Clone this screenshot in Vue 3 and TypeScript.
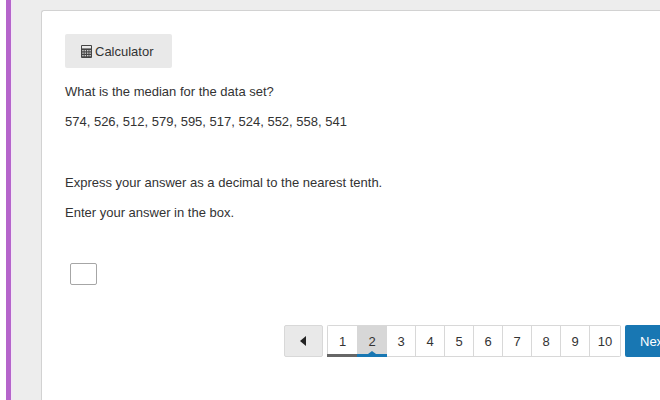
<script setup lang="ts">
import { ref } from 'vue'

const answer = ref<string>('')
const pages: number[] = Array.from({ length: 10 }, (_, i) => i + 1)
const current = ref<number>(2)
const visited = ref<number[]>([1])

function go(page: number): void {
  if (page < 1 || page > pages.length) return
  if (!visited.value.includes(current.value)) visited.value.push(current.value)
  current.value = page
}
</script>

<template>
  <div class="page">
    <main class="card">
      <button type="button" class="calculator">
        <svg class="calc-icon" viewBox="0 0 11 13" aria-hidden="true">
          <rect width="11" height="13" rx="1" fill="#444" />
          <rect x="1" y="1" width="9" height="2.4" fill="#e9e9e9" />
          <g fill="#cfcfcf">
            <rect x="1.2" y="5" width="1.5" height="1.3" />
            <rect x="3.6" y="5" width="1.5" height="1.3" />
            <rect x="6" y="5" width="1.5" height="1.3" />
            <rect x="8.4" y="5" width="1.5" height="1.3" />
            <rect x="1.2" y="7.5" width="1.5" height="1.3" />
            <rect x="3.6" y="7.5" width="1.5" height="1.3" />
            <rect x="6" y="7.5" width="1.5" height="1.3" />
            <rect x="8.4" y="7.5" width="1.5" height="1.3" />
            <rect x="1.2" y="10" width="1.5" height="1.3" />
            <rect x="3.6" y="10" width="1.5" height="1.3" />
            <rect x="6" y="10" width="1.5" height="1.3" />
            <rect x="8.4" y="10" width="1.5" height="1.3" />
          </g>
        </svg>
        <span>Calculator</span>
      </button>

      <section class="prompt">
        <p>What is the median for the data set?</p>
        <p>574, 526, 512, 579, 595, 517, 524, 552, 558, 541</p>
      </section>
      <section class="prompt instructions">
        <p>Express your answer as a decimal to the nearest tenth.</p>
        <p id="answer-label">Enter your answer in the box.</p>
      </section>

      <input v-model="answer" class="answer" type="text" aria-labelledby="answer-label" />

      <nav class="pager" aria-label="Questions">
        <button type="button" class="previous" aria-label="Previous" @click="go(current - 1)">
          <svg class="arrow" viewBox="0 0 6 10" aria-hidden="true">
            <path d="M6 0V10L0 5Z" fill="#222" />
          </svg>
        </button>
        <div class="numbers">
          <button
            v-for="page in pages"
            :key="page"
            type="button"
            class="number"
            :class="{ visited: visited.includes(page), current: page === current }"
            :aria-current="page === current ? 'page' : undefined"
            @click="go(page)"
          >
            {{ page }}
          </button>
        </div>
        <button type="button" class="next" @click="go(current + 1)">Next</button>
      </nav>
    </main>
  </div>
</template>

<style>
body {
  background: #fff;
}
</style>

<style scoped>
.page {
  box-sizing: border-box;
  min-height: 100vh;
  display: flex;
  overflow: hidden;
  margin-left: 6px;
  padding: 10px 0 0 30px;
  border-left: 5px solid #b565cb;
  background: linear-gradient(to right, #f2e6f5 2px, #ededed 2px);
  color: #333;
  font-family: "Liberation Sans", Arial, sans-serif;
  font-size: 13px;
  line-height: 20px;
}

.card {
  box-sizing: border-box;
  flex: 1;
  min-width: 0;
  padding: 23px 0 24px 23px;
  border: 1px solid #d2d2d2;
  border-right: 0;
  border-bottom: 0;
  border-top-left-radius: 3px;
  background: #fff;
}

button {
  box-sizing: border-box;
  margin: 0;
  padding: 0;
  border: 0;
  color: inherit;
  font: inherit;
  cursor: pointer;
}

.calculator {
  display: flex;
  align-items: center;
  gap: 3px;
  height: 34px;
  padding: 1px 18px 0 16px;
  border-radius: 2px;
  background: #e9e9e9;
}

.calc-icon {
  width: 11px;
  height: 13px;
}

.prompt {
  display: flex;
  flex-direction: column;
  gap: 10px;
  margin-top: 14px;
}

.prompt p {
  margin: 0;
}

.instructions {
  margin-top: 41px;
}

.answer {
  box-sizing: border-box;
  display: block;
  width: 27px;
  height: 22px;
  margin: 40px 0 0 5px;
  padding: 0 3px;
  border: 1px solid #a6a6a6;
  border-radius: 2px;
  background: #fff;
  color: inherit;
  font: inherit;
}

.pager {
  display: flex;
  gap: 4px;
  margin: 40px 0 0 219px;
}

.previous,
.numbers,
.next {
  box-sizing: border-box;
  flex: none;
  height: 32px;
  border-radius: 2px;
}

.previous {
  display: flex;
  align-items: center;
  justify-content: center;
  width: 39px;
  padding-right: 2px;
  border: 1px solid #d8d8d8;
  background: #e9e9e9;
}

.arrow {
  width: 6px;
  height: 10px;
}

.numbers {
  display: flex;
  border: 1px solid #d8d8d8;
  border-right: 0;
}

.number {
  position: relative;
  width: 29px;
  padding-top: 1px;
  border-right: 1px solid #d8d8d8;
  background: #fff;
}

.number:last-child {
  width: 31px;
}

.number.visited,
.number.current {
  border-right: 0;
}

.number.current {
  width: 30px;
  background: #d7d7d7;
}

.visited::before,
.current::before {
  content: "";
  position: absolute;
  right: 0;
  bottom: -1px;
  left: 0;
  height: 3px;
  background: #666;
}

.number:first-child::before {
  left: -1px;
}

.current::before {
  background: #1877b3;
}

.current::after {
  content: "";
  position: absolute;
  bottom: 2px;
  left: calc(50% - 4px);
  border: 4px solid transparent;
  border-top: 0;
  border-bottom: 3px solid #1877b3;
}

.next {
  padding: 1px 15px 0;
  background: #1877b3;
  color: #fff;
}
</style>
